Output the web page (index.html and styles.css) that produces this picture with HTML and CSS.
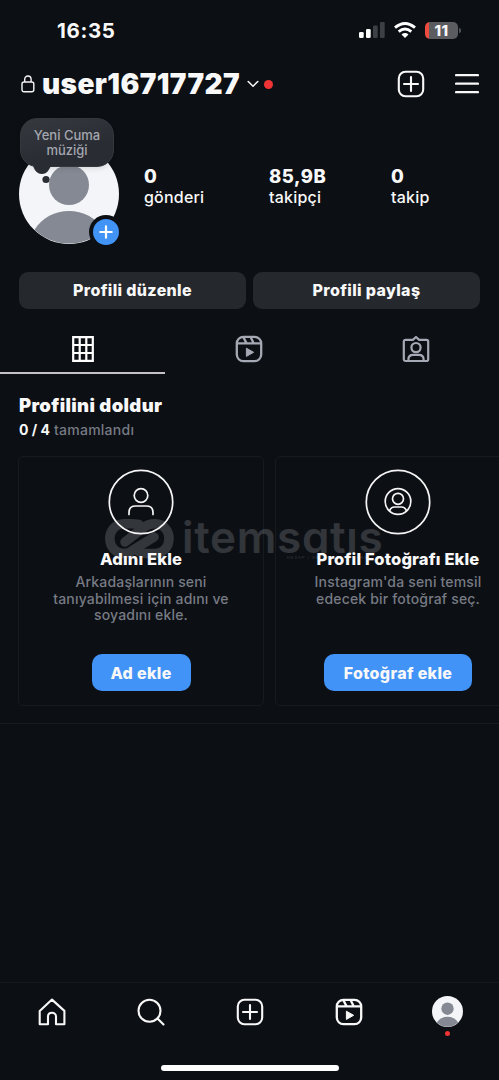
FILE: index.html
```
<!DOCTYPE html>
<html lang="tr">
<head>
<meta charset="utf-8">
<meta name="viewport" content="width=device-width, initial-scale=1">
<title>user16717727</title>
<link rel="stylesheet" href="styles.css">
</head>
<body>
<svg class="defs" width="0" height="0" aria-hidden="true">
  <symbol id="plus-box" viewBox="0 0 28 28"><g fill="none" stroke="currentColor" stroke-width="2.1" stroke-linecap="round"><rect x="1.8" y="1.8" width="24.4" height="24.4" rx="6.6"/><path d="M14 7v14M7 14h14"/></g></symbol>
  <symbol id="reels" viewBox="0 0 28 28"><g fill="none" stroke="currentColor" stroke-width="2.3" stroke-linejoin="round"><rect x="1.8" y="1.8" width="24.4" height="24.4" rx="6.6"/><path d="M2 8.4h24M8.400 2.2l3.200 6.2M15.600 2l3.200 6.4"/></g><path fill="currentColor" stroke="currentColor" stroke-linejoin="round" d="M11.4 13.2v8.2l7.2-4.1z"/></symbol>
  <symbol id="avatar" viewBox="0 0 100 100"><circle cx="50" cy="50" r="50" fill="#f4f5f8"/><circle cx="50" cy="41" r="20" fill="#858993"/><path fill="#858993" d="M15.5 85.7C23 73.500 36 67 50 67S77 73.500 84.500 85.700A50 50 0 0 1 15.500 85.700z"/></symbol>
</svg>
<div class="screen">
  <div class="status">
    <span class="time">16:35</span>
    <div class="status-icons">
      <svg class="signal" width="26" height="16" viewBox="0 0 26 16"><rect x="0" y="10" width="4.700" height="6" rx="1.300" fill="#fff"/><rect x="7" y="7" width="4.700" height="9" rx="1.300" fill="#fff"/><rect x="14" y="3.500" width="4.700" height="12.500" rx="1.300" fill="#3d4044"/><rect x="21" y="0" width="4.700" height="16" rx="1.300" fill="#3d4044"/></svg>
      <svg class="wifi" width="22" height="16" viewBox="0 0 22 16"><g fill="none" stroke="#fff" stroke-width="2.900"><path d="M1 5.700Q11-2.700 21 5.700"/><path d="M4.700 9.600Q11 4.400 17.300 9.600"/></g><path fill="#fff" d="M7.500 12.400Q11 9.700 14.500 12.400L11 16z"/></svg>
      <div class="battery"><span>11</span></div><i class="battery-tip"></i>
    </div>
  </div>
  <header class="header">
    <svg class="lock" width="14" height="18" viewBox="0 0 14 18"><g fill="none" stroke="#f5f5f5" stroke-width="1.400"><rect x="1" y="7" width="11.800" height="9.800" rx="2"/><path d="M3.700 7V4.200a3.200 3.200 0 0 1 6.400 0V7"/></g></svg>
    <h1 class="username">user16717727</h1>
    <svg class="chevron" width="12" height="8" viewBox="0 0 12 8"><path d="M1.200 1.500L6 6.200l4.800-4.700" fill="none" stroke="#f5f5f5" stroke-width="1.600" stroke-linecap="round"/></svg>
    <i class="dot"></i>
    <div class="actions">
      <svg width="28" height="28"><use href="#plus-box"/></svg>
      <svg width="24" height="22" viewBox="0 0 24 22"><path d="M1 2.200h22M1 10.700h22M1 19.200h22" stroke="#f8f8f8" stroke-width="2.200" stroke-linecap="round"/></svg>
    </div>
  </header>
  <section class="profile">
    <div class="photo">
      <svg width="100" height="100"><use href="#avatar"/></svg>
      <svg class="tail" width="20" height="26" viewBox="0 0 20 26"><path d="M0 0h20v3.500Q17.500 4 16 7.500Q13.500 12 8.500 12Q3 12 0 4z" fill="#2a2c33"/><circle cx="13" cy="17.500" r="3.600" fill="#2a2c33"/></svg>
      <div class="note"><span>Yeni Cuma</span><span>müziği</span></div>
      <svg class="add" width="34" height="34" viewBox="0 0 34 34"><circle cx="17" cy="17" r="17" fill="#0c0f14"/><circle cx="17" cy="17" r="13" fill="#4193f5"/><path d="M17 11.300v11.400M11.300 17h11.400" stroke="#fff" stroke-width="2.200" stroke-linecap="round"/></svg>
    </div>
    <div class="stats">
      <div><b>0</b><span>gönderi</span></div>
      <div><b class="count">85,9B</b><span>takipçi</span></div>
      <div><b>0</b><span>takip</span></div>
    </div>
  </section>
  <div class="buttons"><button>Profili düzenle</button><button>Profili paylaş</button></div>
  <nav class="tabs">
    <div class="tab active"><svg width="22" height="26" viewBox="0 0 22 26"><path d="M1.200 1.200h19.600v23.600H1.200zM7.700 1v24M14.300 1v24M1 9h20M1 17h20" fill="none" stroke="#fff" stroke-width="2.200"/></svg></div>
    <div class="tab"><svg width="28" height="28"><use href="#reels"/></svg></div>
    <div class="tab"><svg width="28" height="28" viewBox="0 0 28 28"><g fill="none" stroke="currentColor" stroke-width="2.200" stroke-linejoin="round"><path d="M3.500 4.800H10.800L14 2 17.200 4.800h7.300a1.700 1.700 0 0 1 1.700 1.700v17.800a1.700 1.700 0 0 1-1.700 1.700h-21a1.700 1.700 0 0 1-1.700-1.700V6.500A1.700 1.700 0 0 1 3.500 4.800z"/><circle cx="14" cy="12.600" r="4.600"/><path d="M6.400 26v-1.400c0-3 2-4.700 4.700-4.700h5.800c2.700 0 4.700 1.700 4.700 4.700V26"/></g></svg></div>
  </nav>
  <main class="complete">
    <h2>Profilini doldur</h2>
    <p class="progress"><b>0 / 4</b> <span>tamamlandı</span></p>
    <div class="cards">
      <article class="card">
        <svg width="66" height="66" viewBox="0 0 66 66"><g fill="none" stroke="#f5f5f5" stroke-width="1.700"><circle cx="33" cy="33" r="31.700"/><circle cx="33" cy="26.500" r="6.800"/><path d="M21 45.500V43.500c0-4 2.500-6.500 6.500-6.500h11c4 0 6.500 2.500 6.500 6.500v2" stroke-linecap="round"/></g></svg>
        <h3>Adını Ekle</h3>
        <p><span>Arkadaşlarının seni</span><span>tanıyabilmesi için adını ve</span><span>soyadını ekle.</span></p>
        <button class="b1">Ad ekle</button>
      </article>
      <article class="card">
        <svg width="66" height="66" viewBox="0 0 66 66"><g fill="none" stroke="#f5f5f5" stroke-width="1.700"><circle cx="33" cy="33" r="31.700"/><circle cx="33" cy="32.500" r="12.800"/><circle cx="33" cy="29.800" r="5.500"/><path d="M24.500 42c.8-2.600 2.600-4 5-4h7c2.400 0 4.200 1.400 5 4"/></g></svg>
        <h3>Profil Fotoğrafı Ekle</h3>
        <p><span>Instagram'da seni temsil</span><span>edecek bir fotoğraf seç.</span></p>
        <button class="b2">Fotoğraf ekle</button>
      </article>
      <div class="watermark">
        <svg width="69" height="40" viewBox="0 0 69 40"><g fill="none" stroke="#fff" stroke-width="9.500" stroke-linecap="round" stroke-linejoin="round"><path d="M34 5.500Q30 4.800 26 4.800H19C10 4.800 4.800 12 4.800 19.500C4.800 28 11 34.500 19 34.500Q24 34.500 28 31L49 18"/><path d="M20 23L38 9Q43 4.800 50 4.800C59 4.800 64 12 64 19.500C64 28 58 34.500 50 34.500H40Q35 34.500 32 31"/></g></svg>
        <span class="brand">itemsatıs</span>
        <small>HESAP / SKIN / OYUN PARASI</small>
      </div>
    </div>
  </main>
  <footer class="bottom">
    <nav class="dock">
      <div><svg width="28" height="28" viewBox="0 0 28 28"><path d="M1.700 26.200V12.900L14 1.600l12.400 11.300v13.300H18V18.500c0-5-8-5-8 0v7.700z" fill="none" stroke="currentColor" stroke-width="2.100" stroke-linejoin="round"/></svg></div>
      <div><svg width="28" height="28" viewBox="0 0 28 28"><g fill="none" stroke="currentColor" stroke-width="2.100" stroke-linecap="round"><circle cx="12.500" cy="12.700" r="11"/><path d="M20.500 20.500l6 6"/></g></svg></div>
      <div><svg width="28" height="28"><use href="#plus-box"/></svg></div>
      <div><svg width="28" height="28"><use href="#reels"/></svg></div>
      <div class="me"><svg width="31" height="31"><use href="#avatar"/></svg><i></i></div>
    </nav>
    <div class="home-bar"></div>
  </footer>
</div>
</body>
</html>
```
FILE: styles.css
```
* { box-sizing: border-box; }
body { margin: 0; background: #0c0f14; color: #f8f8f8; font-family: Inter, "Noto Sans", sans-serif; }
h1, h2, h3, p { margin: 0; white-space: nowrap; }
svg { display: block; flex: none; }
button { border: 0; padding: 0; font: 800 16px/20px Inter, sans-serif; letter-spacing: .35px; color: #f8f8f8; }
.defs { position: absolute; }
.screen { width: 499px; height: 1080px; overflow: hidden; display: flex; flex-direction: column; }
.status { height: 60px; flex: none; padding: 0 38px 0 57px; display: flex; align-items: center; justify-content: space-between; }
.time { font-size: 20.500px; font-weight: 750; letter-spacing: .65px; }
.status-icons { display: flex; align-items: center; }
.wifi { margin-left: 9px; }
.battery { margin-left: 9px; width: 33px; height: 17px; border-radius: 5px; background: linear-gradient(90deg, #ee4b40 3.500px, #5b5c60 3.500px); text-align: center; font-size: 15px; font-weight: 800; line-height: 17px; letter-spacing: .5px; }
.battery-tip { width: 2px; height: 5px; margin-left: 1px; border-radius: 0 2px 2px 0; background: #515358; }
.header { height: 48px; flex: none; display: flex; align-items: center; padding: 0 20px 0 21px; }
.username { margin-left: 7px; width: 198px; font-size: 28px; font-weight: 900; letter-spacing: .4px; line-height: 34px; }
.chevron { margin-left: 7px; }
.dot { width: 9px; height: 9px; margin-left: 5px; border-radius: 50%; background: #ee3434; }
.actions { margin-left: auto; display: flex; align-items: center; gap: 30px; }
.profile { height: 164px; flex: none; display: flex; padding: 36px 0 0 19px; }
.photo { position: relative; width: 100px; height: 100px; }
.note { position: absolute; left: 1px; top: -26px; width: 94px; height: 49px; border: 1px solid #35383d; border-radius: 17px; background: linear-gradient(165deg, #36393e, #292c33 65%); color: #a4a7af; display: flex; flex-direction: column; align-items: center; padding-top: 9px; font-size: 13px; font-weight: 500; line-height: 15px; box-shadow: 0 2px 5px #0000001a; }
.tail { position: absolute; left: 14px; top: 18px; z-index: 1; clip-path: inset(4px 0 0 0); }
.add { position: absolute; left: 70px; top: 71px; }
.stats { display: grid; grid-template-columns: 125px 122px 80px; padding: 21px 0 0 25px; align-items: start; }
.stats div { display: flex; flex-direction: column; align-items: flex-start; }
.stats b { font-size: 18.500px; font-weight: 800; line-height: 22px; }
.stats .count { letter-spacing: .5px; }
.stats span { font-size: 16px; font-weight: 500; line-height: 20px; letter-spacing: .2px; }
.buttons { display: flex; gap: 7px; padding: 0 19px; height: 37px; flex: none; }
.buttons button { flex: 1; border-radius: 9px; background: #25282d; padding-bottom: 1px; }
.tabs { height: 65px; flex: none; display: flex; color: #a5a9b3; }
.tab { flex: 1; display: flex; flex-direction: column; align-items: center; padding-top: 26px; }
.tab.active { position: relative; padding-top: 27px; }
.tab.active::after { content: ""; position: absolute; left: 0; bottom: 0; width: 165px; height: 2px; background: #c4c2c6; }
.complete { height: 350px; flex: none; padding: 20px 0 0 18px; border-bottom: 1px solid #171a1f; }
h2 { font-size: 18.500px; font-weight: 900; line-height: 22px; letter-spacing: .35px; padding-left: 1px; }
.progress { padding-left: 1px; font-size: 14px; line-height: 18px; margin-top: 5px; color: #777b84; font-weight: 500; letter-spacing: .25px; }
.progress b { color: #f8f8f8; font-weight: 750; letter-spacing: 0; }
.cards { position: relative; display: flex; gap: 11px; margin-top: 17px; }
.card { width: 246px; height: 250px; flex: none; border: 1px solid #171a1f; border-radius: 5px; display: flex; flex-direction: column; align-items: center; padding-top: 12px; }
.card > svg { position: relative; z-index: 2; }
.card h3 { position: relative; z-index: 2; font-size: 16.500px; font-weight: 800; line-height: 20px; letter-spacing: .15px; margin-top: 14px; }
.card p { display: flex; flex-direction: column; align-items: center; margin-top: 5px; height: 50px; font-size: 14px; line-height: 16.500px; color: #777b84; font-weight: 500; letter-spacing: .17px; }
.card button { background: #4193f7; height: 37px; border-radius: 10px; margin-top: 30px; }
.b1 { width: 99px; }
.b2 { width: 148px; }
.watermark { position: absolute; left: 87px; top: 63px; width: 280px; height: 40px; opacity: .16; display: flex; align-items: center; }
.brand { margin-left: 8px; margin-top: -4px; font-size: 44px; line-height: 44px; font-weight: 600; letter-spacing: .7px; font-feature-settings: "cv11"; white-space: nowrap; }
.watermark small { position: absolute; left: 182px; top: 36px; font-size: 4px; letter-spacing: 1px; white-space: nowrap; }
.bottom { margin-top: auto; height: 98px; flex: none; border-top: 1px solid #15181d; }
.dock { display: flex; padding: 0 2px; height: 57px; }
.dock div { flex: 1; display: flex; justify-content: center; align-items: center; }
.me { position: relative; }
.me i { position: absolute; top: 48px; width: 5px; height: 5px; border-radius: 50%; background: #ee3434; }
.home-bar { width: 178px; height: 6px; border-radius: 3px; background: #fff; margin: 25px auto 0; }
```
